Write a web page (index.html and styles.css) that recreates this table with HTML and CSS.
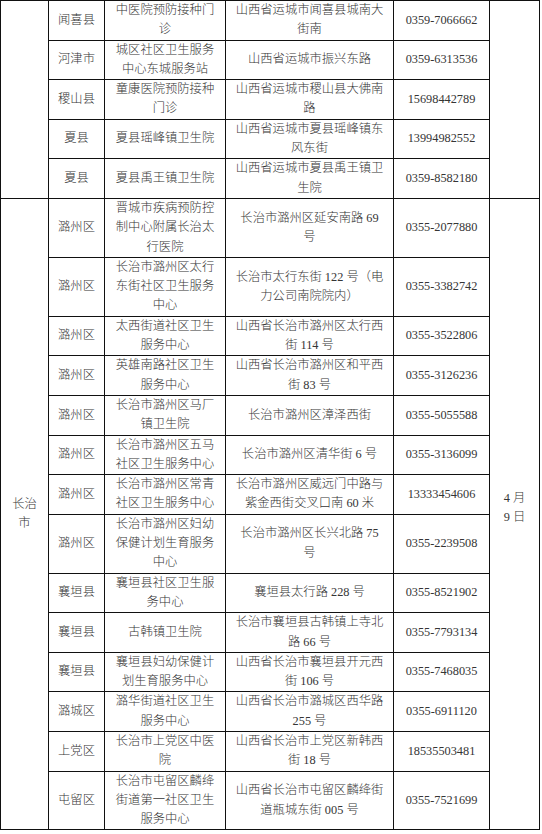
FILE: index.html
```html
<!DOCTYPE html>
<html lang="zh-CN">
<head>
<meta charset="utf-8">
<title>接种点名单</title>
<link rel="stylesheet" href="styles.css">
</head>
<body>
<table class="sites">
  <colgroup>
    <col class="c-city">
    <col class="c-dist">
    <col class="c-name">
    <col class="c-addr">
    <col class="c-phone">
    <col class="c-date">
  </colgroup>
  <tbody>
    <tr>
      <td class="city" rowspan="5"></td>
      <td>闻喜县</td>
      <td>中医院预防接种门<br>诊</td>
      <td>山西省运城市闻喜县城南大<br>街南</td>
      <td>0359-7066662</td>
      <td class="date" rowspan="5"></td>
    </tr>
    <tr>
      <td>河津市</td>
      <td>城区社区卫生服务<br>中心东城服务站</td>
      <td>山西省运城市振兴东路</td>
      <td>0359-6313536</td>
    </tr>
    <tr>
      <td>稷山县</td>
      <td>童康医院预防接种<br>门诊</td>
      <td>山西省运城市稷山县大佛南<br>路</td>
      <td>15698442789</td>
    </tr>
    <tr>
      <td>夏县</td>
      <td>夏县瑶峰镇卫生院</td>
      <td>山西省运城市夏县瑶峰镇东<br>风东街</td>
      <td>13994982552</td>
    </tr>
    <tr>
      <td>夏县</td>
      <td>夏县禹王镇卫生院</td>
      <td>山西省运城市夏县禹王镇卫<br>生院</td>
      <td>0359-8582180</td>
    </tr>
    <tr>
      <td class="city" rowspan="14">长治<br>市</td>
      <td>潞州区</td>
      <td>晋城市疾病预防控<br>制中心附属长治太<br>行医院</td>
      <td>长治市潞州区延安南路 69<br>号</td>
      <td>0355-2077880</td>
      <td class="date" rowspan="14"><span class="date-text">4 月<br>9 日</span></td>
    </tr>
    <tr>
      <td>潞州区</td>
      <td>长治市潞州区太行<br>东街社区卫生服务<br>中心</td>
      <td>长治市太行东街 122 号（电<br>力公司南院院内）</td>
      <td>0355-3382742</td>
    </tr>
    <tr>
      <td>潞州区</td>
      <td>太西街道社区卫生<br>服务中心</td>
      <td>山西省长治市潞州区太行西<br>街 114 号</td>
      <td>0355-3522806</td>
    </tr>
    <tr>
      <td>潞州区</td>
      <td>英雄南路社区卫生<br>服务中心</td>
      <td>山西省长治市潞州区和平西<br>街 83 号</td>
      <td>0355-3126236</td>
    </tr>
    <tr>
      <td>潞州区</td>
      <td>长治市潞州区马厂<br>镇卫生院</td>
      <td>长治市潞州区漳泽西街</td>
      <td>0355-5055588</td>
    </tr>
    <tr>
      <td>潞州区</td>
      <td>长治市潞州区五马<br>社区卫生服务中心</td>
      <td>长治市潞州区清华街 6 号</td>
      <td>0355-3136099</td>
    </tr>
    <tr>
      <td>潞州区</td>
      <td>长治市潞州区常青<br>社区卫生服务中心</td>
      <td>长治市潞州区威远门中路与<br>紫金西街交叉口南 60 米</td>
      <td>13333454606</td>
    </tr>
    <tr>
      <td>潞州区</td>
      <td>长治市潞州区妇幼<br>保健计划生育服务<br>中心</td>
      <td>长治市潞州区长兴北路 75<br>号</td>
      <td>0355-2239508</td>
    </tr>
    <tr>
      <td>襄垣县</td>
      <td>襄垣县社区卫生服<br>务中心</td>
      <td>襄垣县太行路 228 号</td>
      <td>0355-8521902</td>
    </tr>
    <tr>
      <td>襄垣县</td>
      <td>古韩镇卫生院</td>
      <td>长治市襄垣县古韩镇上寺北<br>路 66 号</td>
      <td>0355-7793134</td>
    </tr>
    <tr>
      <td>襄垣县</td>
      <td>襄垣县妇幼保健计<br>划生育服务中心</td>
      <td>山西省长治市襄垣县开元西<br>街 106 号</td>
      <td>0355-7468035</td>
    </tr>
    <tr>
      <td>潞城区</td>
      <td>潞华街道社区卫生<br>服务中心</td>
      <td>山西省长治市潞城区西华路<br>255 号</td>
      <td>0355-6911120</td>
    </tr>
    <tr>
      <td>上党区</td>
      <td>长治市上党区中医<br>院</td>
      <td>山西省长治市上党区新韩西<br>街 18 号</td>
      <td>18535503481</td>
    </tr>
    <tr>
      <td>屯留区</td>
      <td>长治市屯留区麟绛<br>街道第一社区卫生<br>服务中心</td>
      <td>山西省长治市屯留区麟绛街<br>道瓶城东街 005 号</td>
      <td>0355-7521699</td>
    </tr>
  </tbody>
</table>
</body>
</html>
```
FILE: styles.css
```css
html, body {
  margin: 0;
  padding: 0;
  background: #ffffff;
}

.sites {
  border-collapse: collapse;
  table-layout: fixed;
  width: 539px;
  font-family: "Liberation Serif", "Noto Sans CJK SC", serif;
  font-weight: 300;
  font-size: 12.3px;
  line-height: 19.3px;
  color: #353535;
}

.c-city { width: 48px; }
.c-dist { width: 56px; }
.c-name { width: 121px; }
.c-addr { width: 168px; }
.c-phone { width: 96px; }
.c-date { width: 50px; }

.sites td {
  border: 1px solid #111111;
  padding: 0;
  text-align: center;
  vertical-align: middle;
  white-space: nowrap;
}

.sites .date-text {
  display: block;
  padding-bottom: 12px;
}
```
